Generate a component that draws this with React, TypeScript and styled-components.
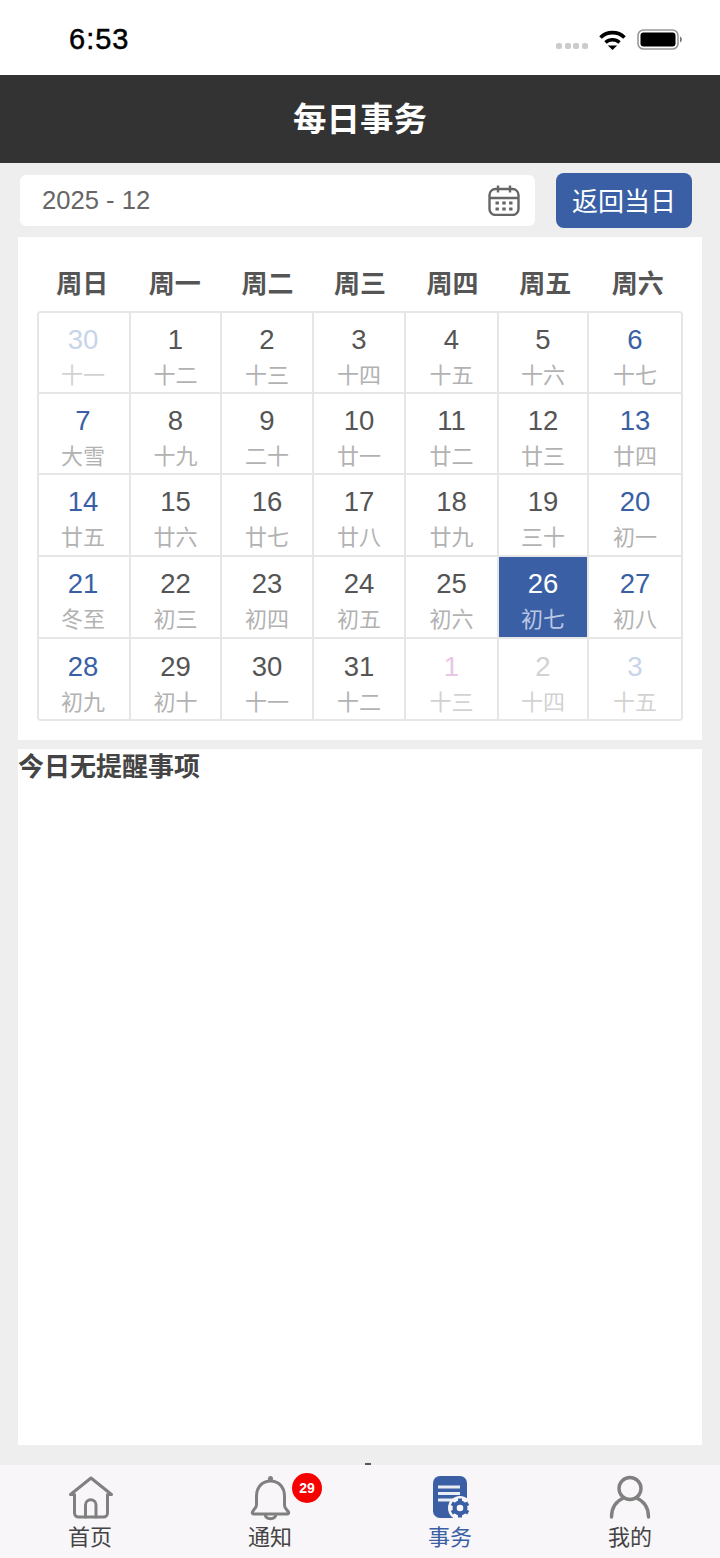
import React from "react";
import styled, { createGlobalStyle } from "styled-components";

const BLUE = "#3a5fa5";
const FONT = `"Liberation Sans", "Noto Sans CJK SC", sans-serif`;

const GlobalStyle = createGlobalStyle`
  * {
    box-sizing: border-box;
  }
  body {
    margin: 0;
    background: #eeeeee;
    font-family: ${FONT};
  }
`;
const Page = styled.div`
  display: flex;
  flex-direction: column;
  width: 720px;
  height: 1558px;
  overflow: hidden;
`;
const StatusBar = styled.div`
  display: flex;
  align-items: center;
  justify-content: space-between;
  flex-shrink: 0;
  height: 75px;
  padding: 4px 37px 0 69px;
  background: #fff;
`;
const Clock = styled.div`
  font-size: 29px;
  font-weight: 500;
  letter-spacing: 1px;
  color: #000;
  -webkit-text-stroke: 0.5px #000;
`;
const StatusIcons = styled.div`
  display: flex;
  align-items: center;
  gap: 11px;
`;
const Signal = styled.div`
  display: flex;
  gap: 2.67px;
  margin-top: 13px;
`;
const SignalDot = styled.span`
  width: 6px;
  height: 6px;
  border-radius: 2px;
  background: #cccccc;
`;
const Header = styled.div`
  display: flex;
  align-items: center;
  justify-content: center;
  flex-shrink: 0;
  height: 88px;
  padding-bottom: 6px;
  background: #333333;
  color: #fff;
  font-size: 33.5px;
  font-weight: 700;
`;
const Toolbar = styled.div`
  display: flex;
  align-items: center;
  justify-content: space-between;
  flex-shrink: 0;
  height: 74px;
  padding: 1px 28px 0 20px;
`;
const DateField = styled.div`
  display: flex;
  align-items: center;
  justify-content: space-between;
  width: 515px;
  height: 51px;
  padding: 0 15px 0 22px;
  background: #fff;
  border-radius: 6px;
  color: #666;
  font-size: 25.6px;
`;
const TodayButton = styled.div`
  display: flex;
  align-items: center;
  justify-content: center;
  width: 136px;
  height: 55px;
  padding-bottom: 2px;
  background: ${BLUE};
  border-radius: 8px;
  color: #fff;
  font-size: 26px;
`;
const Card = styled.div`
  margin: 0 18px;
  background: #fff;
`;
const CalendarCard = styled(Card)`
  height: 503px;
  margin-bottom: 9px;
  padding: 26px 19px 0;
`;
const ReminderCard = styled(Card)`
  height: 696px;
`;
const Weekdays = styled.div`
  display: grid;
  grid-template-columns: repeat(7, 1fr);
  align-items: center;
  width: 648px;
  height: 48px;
  margin-left: -1px;
  padding-bottom: 12px;
`;
const Weekday = styled.div`
  text-align: center;
  font-size: 26px;
  font-weight: 700;
  color: #555;
`;
const Grid = styled.div`
  display: grid;
  grid-template-columns: 92px 91px 92px 92px 93px 90px 92px;
  grid-template-rows: 81px 81px 82px 82px 80px;
  width: 646px;
  border: 2px solid #e6e6e6;
  border-radius: 4px;
  overflow: hidden;
`;
const CELL_PADDING = [14, 12, 12, 12, 13];
const Cell = styled.div<{ $active?: boolean; $col: number; $row: number }>`
  display: flex;
  flex-direction: column;
  align-items: center;
  padding-top: ${p => CELL_PADDING[p.$row]}px;
  margin-left: ${p => (p.$col === 0 ? "-2px" : "0")};
  margin-top: ${p => (p.$row === 0 ? "-2px" : "0")};
  border-right: ${p => (p.$col === 6 ? "none" : "2px solid #e6e6e6")};
  border-bottom: ${p => (p.$row === 4 ? "none" : "2px solid #e6e6e6")};
  background: ${p => (p.$active ? BLUE : "#fff")};
`;
const Day = styled.div<{ $color: string }>`
  height: 30px;
  line-height: 30px;
  font-size: 27.5px;
  color: ${p => p.$color};
`;
const Lunar = styled.div<{ $color: string }>`
  height: 30px;
  margin-top: 6px;
  line-height: 30px;
  font-size: 22px;
  color: ${p => p.$color};
`;
const Reminder = styled.div`
  font-size: 26px;
  font-weight: 700;
  line-height: 37px;
  color: #444;
`;
const Gap = styled.div`
  position: relative;
  flex-grow: 1;
`;
const Speck = styled.span`
  position: absolute;
  left: 365px;
  bottom: 0;
  width: 6px;
  height: 2px;
  background: #555;
`;
const TabBar = styled.div`
  display: grid;
  grid-template-columns: repeat(4, 1fr);
  flex-shrink: 0;
  height: 93px;
  background: #f8f6f8;
`;
const Tab = styled.div<{ $active?: boolean }>`
  position: relative;
  display: flex;
  flex-direction: column;
  align-items: center;
  padding-top: 11px;
  font-size: 22px;
  line-height: 30px;
  color: ${p => (p.$active ? BLUE : "#444")};
`;
const TabIcon = styled.svg`
  display: block;
  width: 48px;
  height: 46px;
  margin-bottom: 1px;
  overflow: visible;
`;
const Badge = styled.span`
  position: absolute;
  top: 8px;
  left: 112px;
  display: flex;
  align-items: center;
  justify-content: center;
  width: 30px;
  height: 30px;
  border-radius: 50%;
  background: #f70000;
  color: #fff;
  font-size: 14px;
  font-weight: 700;
`;

const weekdays = ["周日", "周一", "周二", "周三", "周四", "周五", "周六"];
const OUT_WEEKEND = "#c8d4ea";
const days: [string, string][] = [
  ["30", "十一"], ["1", "十二"], ["2", "十三"], ["3", "十四"], ["4", "十五"], ["5", "十六"], ["6", "十七"],
  ["7", "大雪"], ["8", "十九"], ["9", "二十"], ["10", "廿一"], ["11", "廿二"], ["12", "廿三"], ["13", "廿四"],
  ["14", "廿五"], ["15", "廿六"], ["16", "廿七"], ["17", "廿八"], ["18", "廿九"], ["19", "三十"], ["20", "初一"],
  ["21", "冬至"], ["22", "初三"], ["23", "初四"], ["24", "初五"], ["25", "初六"], ["26", "初七"], ["27", "初八"],
  ["28", "初九"], ["29", "初十"], ["30", "十一"], ["31", "十二"], ["1", "十三"], ["2", "十四"], ["3", "十五"],
];

const dayColor = (i: number, col: number) => {
  if (i === 0 || i === 34) return OUT_WEEKEND;
  if (i === 32) return "#e8c6e6";
  if (i === 33) return "#d2d2d2";
  if (i === 26) return "#fff";
  return col === 0 || col === 6 ? BLUE : "#555";
};
const lunarColor = (i: number) => {
  if (i === 26) return "#b9c8e2";
  if (i === 0 || i >= 32) return "#d2d2d2";
  return "#b2b2b2";
};

const App = () => (
  <>
    <GlobalStyle />
    <Page>
      <StatusBar>
        <Clock>6:53</Clock>
        <StatusIcons>
          <Signal>
            <SignalDot />
            <SignalDot />
            <SignalDot />
            <SignalDot />
          </Signal>
          <svg width="27" height="20" viewBox="0 0 27 20" fill="none" stroke="#000" strokeWidth="3.600">
            <path d="M1.500 7.500C8 1 19 1 25.500 7.500" />
            <path d="M6.500 12.500c4-3.600 10-3.600 14 0" />
            <path d="M8.800 15.500h9.400L13.500 20z" fill="#000" stroke="none" />
          </svg>
          <svg width="46" height="21" viewBox="0 0 46 21">
            <rect x="1" y="1" width="40" height="19" rx="5.500" fill="none" stroke="#999" strokeWidth="1.600" />
            <rect x="3.500" y="3.500" width="35" height="14" rx="3" fill="#000" />
            <path d="M43 7.500c2.500 .8 2.500 5.200 0 6z" fill="#777" />
          </svg>
        </StatusIcons>
      </StatusBar>
      <Header>每日事务</Header>
      <Toolbar>
        <DateField>
          2025 - 12
          <svg width="32" height="31" viewBox="0 0 32 31" fill="none" stroke="#666" strokeWidth="2.400">
            <rect x="1.500" y="4" width="29" height="26" rx="6" />
            <path d="M1.500 13h29M10 .5v7M22 .5v7" />
            <path d="M7.500 18h3.400M14.300 18h3.400M21.100 18h3.400M7.500 24h3.400M14.300 24h3.400M21.100 24h3.400" strokeWidth="3" />
          </svg>
        </DateField>
        <TodayButton>返回当日</TodayButton>
      </Toolbar>
      <CalendarCard>
        <Weekdays>
          {weekdays.map(w => (
            <Weekday key={w}>{w}</Weekday>
          ))}
        </Weekdays>
        <Grid>
          {days.map(([d, l], i) => (
            <Cell key={i} $col={i % 7} $row={Math.floor(i / 7)} $active={i === 26}>
              <Day $color={dayColor(i, i % 7)}>{d}</Day>
              <Lunar $color={lunarColor(i)}>{l}</Lunar>
            </Cell>
          ))}
        </Grid>
      </CalendarCard>
      <ReminderCard>
        <Reminder>今日无提醒事项</Reminder>
      </ReminderCard>
      <Gap>
        <Speck />
      </Gap>
      <TabBar>
        <Tab>
          <TabIcon viewBox="0 0 48 46" fill="none" stroke="#808080" strokeWidth="3" strokeLinejoin="round" strokeLinecap="round">
            <path d="M25 2L4.500 18.500h4V37a4 4 0 0 0 4 4h25a4 4 0 0 0 4-4V18.500h4z" />
            <path d="M19.500 41V29a5 5 0 0 1 10.500 0v12" />
          </TabIcon>
          首页
        </Tab>
        <Tab>
          <TabIcon viewBox="0 0 48 46" fill="none" stroke="#808080" strokeWidth="3" strokeLinejoin="round">
            <circle cx="24.500" cy="2.500" r="2.500" fill="#808080" stroke="none" />
            <path d="M24.500 5c-8 0-14 6-14 15v9c0 2-1 3-2.500 4.500L6.500 36c-.5 1 0 2 1.500 2h33c1.500 0 2-1 1.500-2l-2-2.500C39 32 38.500 31 38.500 29v-9c0-9-6-15-14-15z" />
            <path d="M19 38.500c1 5.500 10 5.500 11 0" />
          </TabIcon>
          通知
          <Badge>29</Badge>
        </Tab>
        <Tab $active>
          <TabIcon viewBox="0 0 48 46">
            <rect x="7" y="0" width="34" height="42" rx="7" fill={BLUE} />
            <path d="M12 11h22M12 17.500h22M12 24h15" stroke="#e8ecf5" strokeWidth="3" />
            <circle cx="34" cy="32" r="12" fill="#f8f6f8" />
            <path d="M34 22.500v19M25.800 27.250l16.400 9.500M25.800 36.750l16.400-9.500" stroke={BLUE} strokeWidth="4" />
            <circle cx="34" cy="32" r="7.500" fill={BLUE} />
            <circle cx="34" cy="32" r="3.300" fill="#f8f6f8" />
          </TabIcon>
          事务
        </Tab>
        <Tab>
          <TabIcon viewBox="0 0 48 46" fill="none" stroke="#808080" strokeWidth="3.400" strokeLinecap="round">
            <circle cx="24" cy="12.500" r="11" />
            <path d="M5.500 41c0-10 5-16 12-19M42.500 41c0-10-5-16-12-19" />
          </TabIcon>
          我的
        </Tab>
      </TabBar>
    </Page>
  </>
);

export default App;
